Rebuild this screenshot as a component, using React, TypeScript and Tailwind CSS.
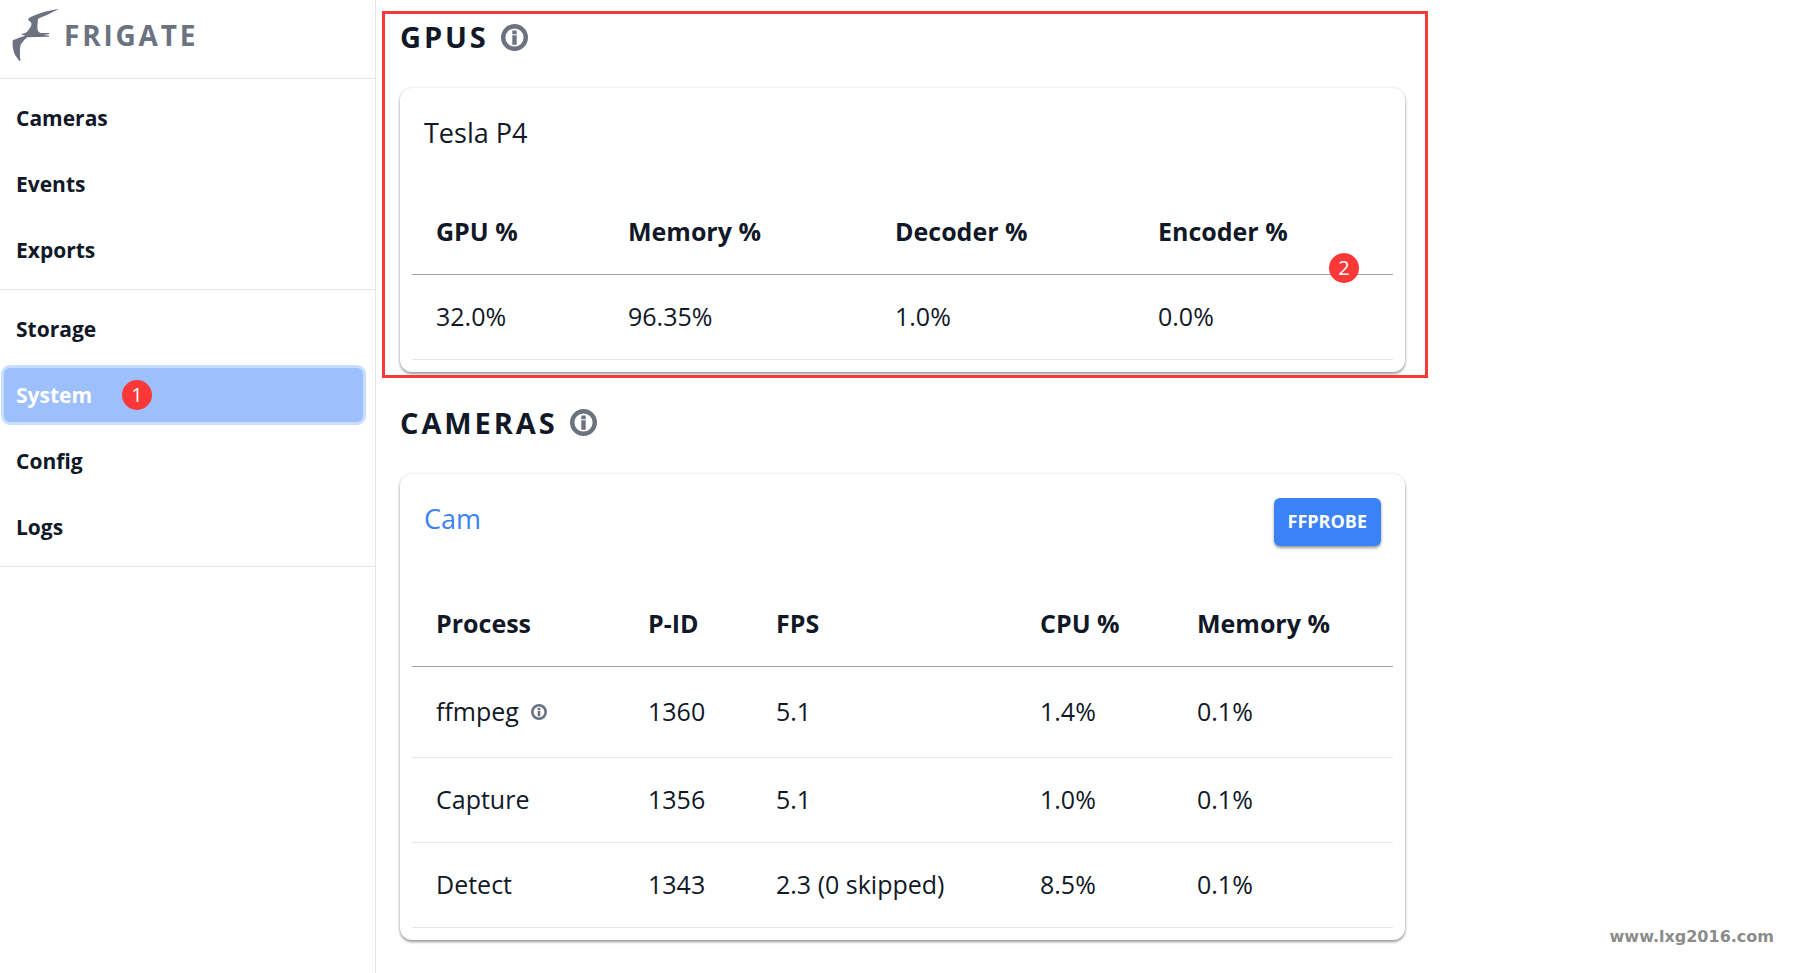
import React from 'react';

const mainLinks = ['Cameras', 'Events', 'Exports'];
const systemLinks = ['Storage', 'System', 'Config', 'Logs'];

const gpuStats = [
  { label: 'GPU %', value: '32.0%', width: 'w-[192px]' },
  { label: 'Memory %', value: '96.35%', width: 'w-[267px]' },
  { label: 'Decoder %', value: '1.0%', width: 'w-[263px]' },
  { label: 'Encoder %', value: '0.0%', width: '' },
];

const processColumns = [
  { label: 'Process', width: 'w-[212px]' },
  { label: 'P-ID', width: 'w-[128px]' },
  { label: 'FPS', width: 'w-[264px]' },
  { label: 'CPU %', width: 'w-[157px]' },
  { label: 'Memory %', width: '' },
];

const processes = [
  { name: 'ffmpeg', pid: '1360', fps: '5.1', cpu: '1.4%', mem: '0.1%', info: true },
  { name: 'Capture', pid: '1356', fps: '5.1', cpu: '1.0%', mem: '0.1%', info: false },
  { name: 'Detect', pid: '1343', fps: '2.3 (0 skipped)', cpu: '8.5%', mem: '0.1%', info: false },
];

function FrigateLogo() {
  return (
    <svg viewBox="36 24 144 162" className="h-[54px] w-12 fill-[#6b7280]" aria-hidden="true">
      <path d="M177 26L140 34Q108 44 92 51L84 57Q86 63 93 67Q96 73 93 79L86 89Q83 95 76 99L62 103L76 107Q50 115 38 121Q36 146 45 165L58 183L61 182Q58 150 62 134Q70 120 82 112L112 111L147 110L147 107L130 104L147 103L147 99L122 99Q115 97 113 91L112 80L114 56Q150 42 177 26Z" />
    </svg>
  );
}

function InfoIcon({ className }: { className: string }) {
  return (
    <svg viewBox="0 0 27 27" className={`${className} fill-[#6b7280]`} aria-hidden="true">
      <circle cx="13.5" cy="13.5" r="11.3" fill="none" strokeWidth="4.4" className="stroke-[#6b7280]" />
      <path d="M11.3 6.5h4.4v3.8h-4.4zM11.3 11.3h4.4v9.4h-4.4z" />
    </svg>
  );
}

function StepBadge({ step, className }: { step: number; className: string }) {
  return (
    <span
      className={`absolute flex size-[30px] items-center justify-center rounded-full bg-[#fb3838] text-xl font-normal text-white ${className}`}
    >
      {step}
    </span>
  );
}

function NavGroup({ links }: { links: string[] }) {
  return (
    <ul className="space-y-3 border-b border-gray-200 py-3 pr-3 pl-1">
      {links.map((link) => {
        const active = link === 'System';
        return (
          <li key={link}>
            <a
              href={`#${link.toLowerCase()}`}
              className={`relative flex h-[54px] items-center rounded-md px-3 pt-[2px] text-[21px] font-bold ${
                active ? 'bg-[#9dbffb] text-white ring-3 ring-[#c7dffe]' : 'text-[#111827]'
              }`}
            >
              {link}
              {active && <StepBadge step={1} className="top-3 left-[118px]" />}
            </a>
          </li>
        );
      })}
    </ul>
  );
}

function SectionHeading({ title }: { title: string }) {
  return (
    <div className="mb-[30px] flex h-[42px] items-center gap-3">
      <h2 className="text-[29px] leading-10 font-bold tracking-widest">{title}</h2>
      <button type="button" aria-label={`About ${title}`}>
        <InfoIcon className="size-[27px]" />
      </button>
    </div>
  );
}

const cardClass = 'rounded-xl bg-white px-3 pb-3 shadow-[0_2px_3px_rgba(0,0,0,0.38),0_0_3px_rgba(0,0,0,0.12)]';
const headCell = 'h-[85px] px-6 text-left font-bold';
const bodyCell = 'px-6';

export default function App() {
  return (
    <div className="flex min-h-screen bg-white font-['Open_Sans','Noto_Sans',sans-serif] text-[#111827]">
      {/* Sidebar */}
      <aside className="w-[376px] shrink-0 border-r border-gray-200">
        <header className="flex h-[79px] items-start gap-1 border-b border-gray-200 pt-2 pl-3">
          <FrigateLogo />
          <h1 className="flex h-[54px] items-center text-[28px] font-bold tracking-widest text-[#6b7280]">FRIGATE</h1>
        </header>
        <nav>
          <NavGroup links={mainLinks} />
          <NavGroup links={systemLinks} />
        </nav>
      </aside>

      {/* Main content */}
      <main className="relative min-w-0 flex-1 px-6 py-4">
        <div className="max-w-[1005px] space-y-[30px]">
          <section className="relative">
            <SectionHeading title="GPUS" />
            <div className={cardClass}>
              <div className="flex h-[101px] items-start px-3 pt-6">
                <h3 className="text-[27px] leading-[42px]">Tesla P4</h3>
              </div>
              <table className="w-full text-[25px]">
                <thead>
                  <tr className="border-b border-[#9ca3af]">
                    {gpuStats.map((stat) => (
                      <th key={stat.label} className={`${headCell} ${stat.width}`}>{stat.label}</th>
                    ))}
                  </tr>
                </thead>
                <tbody>
                  <tr className="h-[85px] border-b border-gray-200">
                    {gpuStats.map((stat) => (
                      <td key={stat.label} className={bodyCell}>{stat.value}</td>
                    ))}
                  </tr>
                </tbody>
              </table>
            </div>
            {/* Highlight around the GPU panel */}
            <div className="pointer-events-none absolute -top-[5px] -right-[23px] -bottom-[6px] -left-[18px] border-3 border-[#fb3838]" />
            <StepBadge step={2} className="right-[46px] bottom-[89px]" />
          </section>

          <section>
            <SectionHeading title="CAMERAS" />
            <div className={cardClass}>
              <div className="flex h-[108px] items-start justify-between px-3 pt-6">
                <a href="#cam" className="text-[27px] leading-[42px] text-[#3b82f6]">Cam</a>
                <button
                  type="button"
                  className="h-12 rounded-md bg-[#3b82f6] px-3.5 pb-[2px] text-lg font-bold text-white shadow-[0_2px_3px_rgba(0,0,0,0.4)]"
                >
                  FFPROBE
                </button>
              </div>
              <table className="w-full text-[25px]">
                <thead>
                  <tr className="border-b border-[#9ca3af]">
                    {processColumns.map((col) => (
                      <th key={col.label} className={`${headCell} ${col.width}`}>{col.label}</th>
                    ))}
                  </tr>
                </thead>
                <tbody>
                  {processes.map((p) => (
                    <tr key={p.name} className={`border-b border-gray-200 ${p.info ? 'h-[91px]' : 'h-[85px]'}`}>
                      <td className={bodyCell}>
                        <span className="flex items-center gap-3">
                          {p.name}
                          {p.info && (
                            <button type="button" aria-label="About ffmpeg">
                              <InfoIcon className="size-4" />
                            </button>
                          )}
                        </span>
                      </td>
                      <td className={bodyCell}>{p.pid}</td>
                      <td className={`${bodyCell} whitespace-nowrap`}>{p.fps}</td>
                      <td className={bodyCell}>{p.cpu}</td>
                      <td className={bodyCell}>{p.mem}</td>
                    </tr>
                  ))}
                </tbody>
              </table>
            </div>
          </section>
        </div>
        {/* Watermark */}
        <span className="absolute right-[26px] bottom-6 font-['DejaVu_Sans',sans-serif] text-base font-bold text-[#8c8c8c]">
          www.lxg2016.com
        </span>
      </main>
    </div>
  );
}
